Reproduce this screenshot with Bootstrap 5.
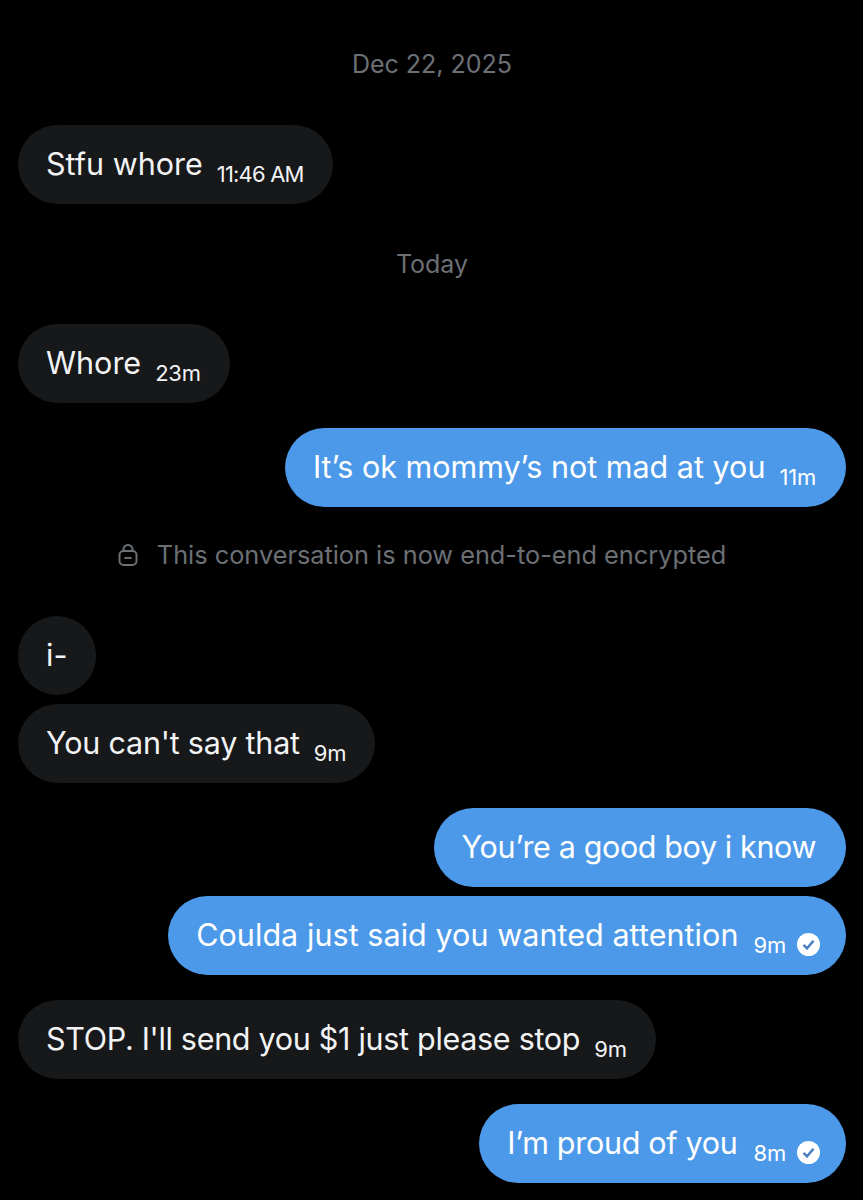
<!DOCTYPE html>
<html lang="en">
<head>
    <meta charset="UTF-8">
    <meta name="viewport" content="width=device-width, initial-scale=1.0">
    <title>Messages</title>
    <link rel="stylesheet" href="https://cdn.jsdelivr.net/npm/bootstrap@5.3.0/dist/css/bootstrap.min.css">
    <style>
        html, body { background: #000; }
        body { font-family: Inter, "Liberation Sans", sans-serif; height: 1200px; overflow: hidden; }
        .chat-wrap { padding: 0 17px 0 18px; }
        .day-label { color: #6c7075; font-size: 25px; line-height: 30px; text-align: center; }
        .day-first { padding-top: 49px; margin-bottom: 46px; }
        .day-today { margin-top: 45px; margin-bottom: 45px; }
        .bubble { height: 79px; border-radius: 40px; padding: 0 29px 2px 28px; color: #f2f3f4; font-size: 30.5px; white-space: nowrap; }
        .bubble-in { background: #17181a; }
        .bubble-out { background: #4c99e9; color: #fff; padding-right: 30px; }
        .stamp { font-size: 22px; margin-left: 14px; position: relative; top: 11px; letter-spacing: -.2px; }
        .stamp-long { letter-spacing: -.8px; }
        .tick { width: 23px; height: 23px; margin: 0 -4px 0 11px; position: relative; top: 10px; }
        .notice { color: #6c7075; font-size: 25.3px; line-height: 30px; margin-top: 33px; margin-bottom: 46px; gap: 19px; padding-right: 20px; }
        .gap-big { margin-top: 25px; }
        .gap-small { margin-top: 9px; }
        .fit-a { letter-spacing: -.2px; }
        .fit-b { letter-spacing: -.3px; }
        .fit-c { letter-spacing: -.38px; }
        .fit-d { letter-spacing: .06px; margin-right: 1px; }
        .fit-e { letter-spacing: -.3px; margin-right: 2px; }
    </style>
</head>
<body>
<div class="chat-wrap d-flex flex-column">
    <div class="day-label day-first">Dec 22, 2025</div>
    <div class="d-flex"><div class="bubble bubble-in d-flex align-items-center">Stfu whore<span class="stamp stamp-long">11:46 AM</span></div></div>

    <div class="day-label day-today">Today</div>
    <div class="d-flex"><div class="bubble bubble-in d-flex align-items-center">Whore<span class="stamp">23m</span></div></div>
    <div class="d-flex justify-content-end gap-big"><div class="bubble bubble-out d-flex align-items-center">It’s ok mommy’s not mad at you<span class="stamp">11m</span></div></div>

    <div class="notice d-flex align-items-center justify-content-center">
        <svg width="20" height="22" viewBox="0 0 20 22" fill="none" stroke="#6c7075" stroke-width="2"><rect x="1.500" y="7" width="17" height="14" rx="4"/><path d="M5.500 7V5.500a4.500 4.500 0 0 1 9 0V7"/><path d="M6.500 14h7"/></svg>
        <span>This conversation is now end-to-end encrypted</span>
    </div>

    <div class="d-flex"><div class="bubble bubble-in d-flex align-items-center">i-</div></div>
    <div class="d-flex gap-small"><div class="bubble bubble-in d-flex align-items-center"><span class="fit-a">You can't say that</span><span class="stamp">9m</span></div></div>

    <div class="d-flex justify-content-end gap-big"><div class="bubble bubble-out d-flex align-items-center"><span class="fit-c">You’re a good boy i know</span></div></div>
    <div class="d-flex justify-content-end gap-small"><div class="bubble bubble-out d-flex align-items-center"><span class="fit-d">Coulda just said you wanted attention</span><span class="stamp">9m</span>
        <svg class="tick" viewBox="0 0 24 24"><circle cx="12" cy="12" r="12" fill="#fff"/><path d="M6.800 12.500l3.600 3.600 6.800-8" fill="none" stroke="#4c7fc0" stroke-width="2.600"/></svg></div></div>

    <div class="d-flex gap-big"><div class="bubble bubble-in d-flex align-items-center"><span class="fit-b">STOP. I'll send you $1 just please stop</span><span class="stamp">9m</span></div></div>

    <div class="d-flex justify-content-end gap-big"><div class="bubble bubble-out d-flex align-items-center"><span class="fit-e">I’m proud of you</span><span class="stamp">8m</span>
        <svg class="tick" viewBox="0 0 24 24"><circle cx="12" cy="12" r="12" fill="#fff"/><path d="M6.800 12.500l3.600 3.600 6.800-8" fill="none" stroke="#4c7fc0" stroke-width="2.600"/></svg></div></div>
</div>

<script src="https://cdn.jsdelivr.net/npm/bootstrap@5.3.0/dist/js/bootstrap.bundle.min.js"></script>
</body>
</html>
